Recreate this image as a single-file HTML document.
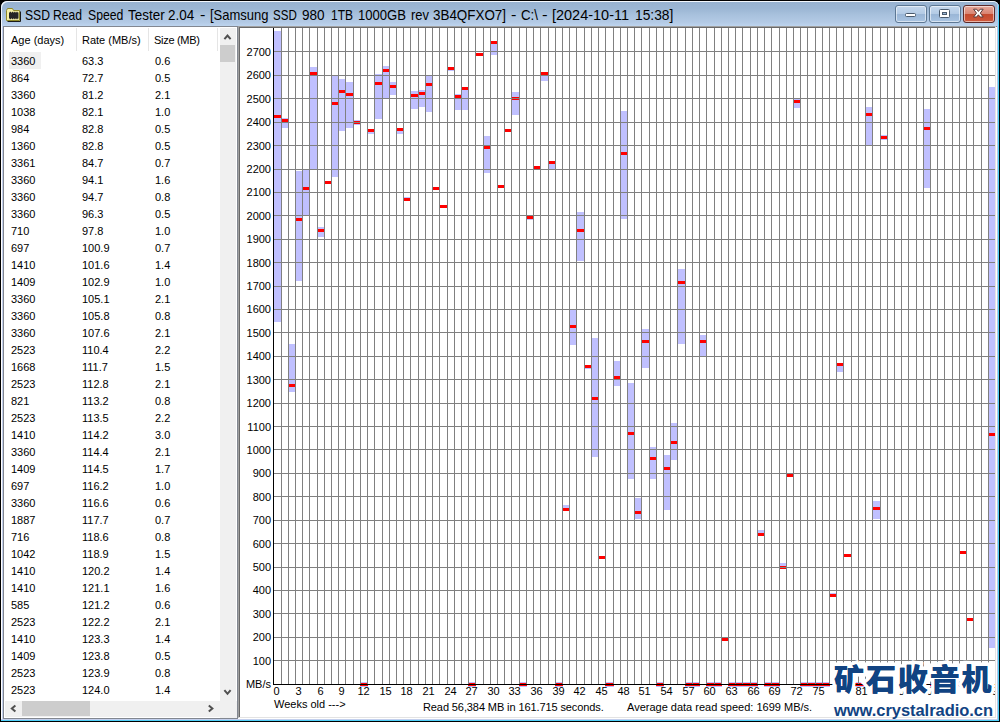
<!DOCTYPE html>
<html><head><meta charset="utf-8"><title>SSD Read Speed Tester</title>
<style>
html,body{margin:0;padding:0;}
body{width:1000px;height:722px;overflow:hidden;position:relative;background:#000;font-family:"Liberation Sans","Noto Sans CJK SC",sans-serif;}
#win{position:absolute;left:0;top:0;width:1000px;height:722px;background:#000;border-radius:7px 7px 0 0;overflow:hidden;}
#frame{position:absolute;left:1px;top:1px;width:998px;height:720px;border-radius:6px 6px 0 0;background:#fff;overflow:hidden;}
#tb{position:absolute;left:0;top:0;width:998px;height:25px;background:linear-gradient(#97b2d0 0,#9bb6d4 30%,#a8c1dd 55%,#b3cae5 85%,#bdd4ee 100%);box-shadow:inset 1px 1px 0 #f2f7fd, inset -1px 0 0 #dbe7f5;border-radius:6px 6px 0 0;}
#tbline{position:absolute;left:2px;top:25px;width:994px;height:1px;background:#6e7f92;}
#title{position:absolute;left:0;top:6px;width:700px;height:18px;font-size:14.5px;line-height:18px;color:#000;white-space:pre;letter-spacing:0px;}
.wb{position:absolute;top:5px;height:16px;border:1px solid #5d7894;border-radius:3px;box-shadow:inset 0 0 0 1px rgba(255,255,255,.55);}
#bmin{left:895px;width:30px;background:linear-gradient(#c5d8ed 0,#b4cbe5 48%,#9ab6d6 52%,#a9c4e2 100%);}
#bmax{left:929px;width:30px;background:linear-gradient(#c5d8ed 0,#b4cbe5 48%,#9ab6d6 52%,#a9c4e2 100%);}
#bcls{left:963px;width:30px;border-color:#5b2a2a;background:linear-gradient(#e6a99c 0,#d98573 48%,#c44a2f 52%,#d0583c 100%);}
#list{position:absolute;left:3px;top:26px;width:235px;height:693px;background:#fff;border:1px solid #828790;box-sizing:border-box;overflow:hidden;}
.hd{position:absolute;top:1px;height:24px;font-size:11px;line-height:24px;color:#000;}
.sep{position:absolute;top:1px;width:1px;height:23px;background:#e5e5e5;}
.row{position:absolute;left:0;height:17px;width:216px;font-size:11px;line-height:17px;color:#000;}
.row span{position:absolute;top:0;}
.c1{left:7px}.c2{left:78px}.c3{left:151px}
#vs{position:absolute;left:216px;top:1px;width:16px;height:689px;background:#f0f0f0;}
#vth{position:absolute;left:0px;top:17px;width:15px;height:17px;background:#cdcdcd;}
#hs{position:absolute;left:1px;top:674px;width:215px;height:16px;background:#f0f0f0;}
#hth{position:absolute;left:17px;top:0px;width:68px;height:15px;background:#cdcdcd;}
#chartp{position:absolute;left:238px;top:26px;width:758px;height:692px;background:#fff;box-sizing:border-box;border-left:1px solid #a0a0a0;border-top:1px solid #a0a0a0;border-right:1px solid #e3e3e3;border-bottom:1px solid #e3e3e3;box-shadow:inset 1px 1px 0 #696969;}
.chart{position:absolute;left:0;top:0;}
.yl{position:absolute;left:230px;width:41px;text-align:right;font-size:11px;line-height:14px;height:14px;color:#000;}
.xl{position:absolute;top:684px;width:20px;text-align:center;font-size:11px;line-height:14px;color:#000;}
.st{position:absolute;top:700px;font-size:11px;line-height:14px;color:#000;white-space:pre;}
#wm1{position:absolute;left:834px;top:655px;font-family:"Noto Sans CJK SC",sans-serif;font-weight:900;font-size:30px;line-height:44px;color:#114382;letter-spacing:1.9px;white-space:pre;-webkit-text-stroke:7px #fff;paint-order:stroke fill;}
#wm1b{position:absolute;left:834px;top:655px;font-family:"Noto Sans CJK SC",sans-serif;font-weight:900;font-size:30px;line-height:44px;color:#114382;letter-spacing:1.9px;white-space:pre;}
#wmbg{position:absolute;left:832px;top:662px;width:163px;height:55px;background:#fff;}
#wm2{position:absolute;left:834px;top:700px;font-weight:bold;font-size:16.5px;line-height:20px;color:#114382;white-space:pre;letter-spacing:-0.05px;}
#title span{position:absolute;top:0;transform-origin:0 0;display:inline-block;}
.ed{position:absolute;}
</style></head><body>
<div id="win"><div id="frame">
<div id="tb"></div><div id="tbline"></div>
<div class="ed" style="left:1px;top:25px;width:1px;height:694px;background:#c3d0ee"></div>
<div class="ed" style="left:0;top:718px;width:998px;height:1px;background:#c3d0ee"></div>
<div class="ed" style="left:996px;top:1px;width:1px;height:719px;background:#b4c6e8"></div>
<div class="ed" style="left:0;top:719px;width:998px;height:1px;background:#4fd0f8"></div>
<div class="ed" style="left:997px;top:1px;width:1px;height:719px;background:#4fd0f8"></div>
</div></div>
<svg style="position:absolute;left:5px;top:7px" width="17" height="15" viewBox="0 0 17 15">
<path d="M1.500 3.500 L2.500 1.500 L7.500 1.500 L8.500 3.500 L14.500 3.500 L14.500 13.500 L1.500 13.500 Z" fill="#f6f0a6" stroke="#8f8a2a" stroke-width="1"/>
<path d="M2.500 14.500 H15.500 V4.500" fill="none" stroke="#1a1a1a" stroke-width="1"/>
<rect x="4" y="5.500" width="9.500" height="6" fill="#262626"/>
<rect x="4.800" y="4.800" width="1.200" height="7.400" fill="#262626"/><rect x="7" y="4.800" width="1.200" height="7.400" fill="#262626"/><rect x="9.200" y="4.800" width="1.200" height="7.400" fill="#262626"/><rect x="11.400" y="4.800" width="1.200" height="7.400" fill="#262626"/>
</svg>
<div id="title"><span style="left:25.1px;transform:scaleX(0.838)">SSD</span> <span style="left:53.1px;transform:scaleX(0.836)">Read</span> <span style="left:87.5px;transform:scaleX(0.844)">Speed</span> <span style="left:127.5px;transform:scaleX(0.927)">Tester</span> <span style="left:167.9px;transform:scaleX(0.928)">2.04</span> <span style="left:199.5px;transform:scaleX(1.115)">-</span> <span style="left:209.5px;transform:scaleX(0.897)">[Samsung</span> <span style="left:273.1px;transform:scaleX(0.798)">SSD</span> <span style="left:301.5px;transform:scaleX(0.934)">980</span> <span style="left:330.5px;transform:scaleX(0.827)">1TB</span> <span style="left:357.5px;transform:scaleX(0.902)">1000GB</span> <span style="left:410.5px;transform:scaleX(0.893)">rev</span> <span style="left:433.1px;transform:scaleX(0.924)">3B4QFXO7]</span> <span style="left:511.1px;transform:scaleX(1.115)">-</span> <span style="left:520.5px;transform:scaleX(0.917)">C:\</span> <span style="left:541.9px;transform:scaleX(1.156)">-</span> <span style="left:551.5px;transform:scaleX(0.998)">[2024-10-11</span> <span style="left:635.1px;transform:scaleX(0.952)">15:38]</span></div>
<div class="wb" id="bmin"><svg width="29" height="16" style="position:absolute;left:1px;top:0"><rect x="8.5" y="7.5" width="10" height="3" rx="1" fill="#fff" stroke="#4a5a6c"/></svg></div>
<div class="wb" id="bmax"><svg width="29" height="16" style="position:absolute;left:1px;top:0"><rect x="8.500" y="3.5" width="10" height="8" rx="1" fill="#fff" stroke="#4a5a6c"/><rect x="11.5" y="6.5" width="4" height="2" fill="#9ab6d6" stroke="#4a5a6c"/></svg></div>
<div class="wb" id="bcls"><svg width="30" height="16" style="position:absolute;left:0;top:0"><path d="M9.600 3.200 L12.600 3.200 L14.400 5.400 L16.200 3.200 L19.200 3.200 L16.300 7.100 L19.200 11 L16.200 11 L14.400 8.800 L12.600 11 L9.600 11 L12.500 7.100 Z" fill="#fff" stroke="#5a3a3a" stroke-width="1" stroke-linejoin="round"/></svg></div>

<div id="list">
<div class="hd" style="left:7px">Age (days)</div><div class="hd" style="left:78px">Rate (MB/s)</div><div class="hd" style="left:150px;letter-spacing:-0.3px">Size (MB)</div>
<div class="sep" style="left:72px"></div><div class="sep" style="left:144px"></div><div class="sep" style="left:213px"></div>
<div style="position:absolute;left:5px;top:25px;width:32px;height:17px;background:#f0f0f0"></div>
<div class="row" style="top:26px"><span class="c1">3360</span><span class="c2">63.3</span><span class="c3">0.6</span></div>
<div class="row" style="top:43px"><span class="c1">864</span><span class="c2">72.7</span><span class="c3">0.5</span></div>
<div class="row" style="top:60px"><span class="c1">3360</span><span class="c2">81.2</span><span class="c3">2.1</span></div>
<div class="row" style="top:77px"><span class="c1">1038</span><span class="c2">82.1</span><span class="c3">1.0</span></div>
<div class="row" style="top:94px"><span class="c1">984</span><span class="c2">82.8</span><span class="c3">0.5</span></div>
<div class="row" style="top:111px"><span class="c1">1360</span><span class="c2">82.8</span><span class="c3">0.5</span></div>
<div class="row" style="top:128px"><span class="c1">3361</span><span class="c2">84.7</span><span class="c3">0.7</span></div>
<div class="row" style="top:145px"><span class="c1">3360</span><span class="c2">94.1</span><span class="c3">1.6</span></div>
<div class="row" style="top:162px"><span class="c1">3360</span><span class="c2">94.7</span><span class="c3">0.8</span></div>
<div class="row" style="top:179px"><span class="c1">3360</span><span class="c2">96.3</span><span class="c3">0.5</span></div>
<div class="row" style="top:196px"><span class="c1">710</span><span class="c2">97.8</span><span class="c3">1.0</span></div>
<div class="row" style="top:213px"><span class="c1">697</span><span class="c2">100.9</span><span class="c3">0.7</span></div>
<div class="row" style="top:230px"><span class="c1">1410</span><span class="c2">101.6</span><span class="c3">1.4</span></div>
<div class="row" style="top:247px"><span class="c1">1409</span><span class="c2">102.9</span><span class="c3">1.0</span></div>
<div class="row" style="top:264px"><span class="c1">3360</span><span class="c2">105.1</span><span class="c3">2.1</span></div>
<div class="row" style="top:281px"><span class="c1">3360</span><span class="c2">105.8</span><span class="c3">0.8</span></div>
<div class="row" style="top:298px"><span class="c1">3360</span><span class="c2">107.6</span><span class="c3">2.1</span></div>
<div class="row" style="top:315px"><span class="c1">2523</span><span class="c2">110.4</span><span class="c3">2.2</span></div>
<div class="row" style="top:332px"><span class="c1">1668</span><span class="c2">111.7</span><span class="c3">1.5</span></div>
<div class="row" style="top:349px"><span class="c1">2523</span><span class="c2">112.8</span><span class="c3">2.1</span></div>
<div class="row" style="top:366px"><span class="c1">821</span><span class="c2">113.2</span><span class="c3">0.8</span></div>
<div class="row" style="top:383px"><span class="c1">2523</span><span class="c2">113.5</span><span class="c3">2.2</span></div>
<div class="row" style="top:400px"><span class="c1">1410</span><span class="c2">114.2</span><span class="c3">3.0</span></div>
<div class="row" style="top:417px"><span class="c1">3360</span><span class="c2">114.4</span><span class="c3">2.1</span></div>
<div class="row" style="top:434px"><span class="c1">1409</span><span class="c2">114.5</span><span class="c3">1.7</span></div>
<div class="row" style="top:451px"><span class="c1">697</span><span class="c2">116.2</span><span class="c3">1.0</span></div>
<div class="row" style="top:468px"><span class="c1">3360</span><span class="c2">116.6</span><span class="c3">0.6</span></div>
<div class="row" style="top:485px"><span class="c1">1887</span><span class="c2">117.7</span><span class="c3">0.7</span></div>
<div class="row" style="top:502px"><span class="c1">716</span><span class="c2">118.6</span><span class="c3">0.8</span></div>
<div class="row" style="top:519px"><span class="c1">1042</span><span class="c2">118.9</span><span class="c3">1.5</span></div>
<div class="row" style="top:536px"><span class="c1">1410</span><span class="c2">120.2</span><span class="c3">1.4</span></div>
<div class="row" style="top:553px"><span class="c1">1410</span><span class="c2">121.1</span><span class="c3">1.6</span></div>
<div class="row" style="top:570px"><span class="c1">585</span><span class="c2">121.2</span><span class="c3">0.6</span></div>
<div class="row" style="top:587px"><span class="c1">2523</span><span class="c2">122.2</span><span class="c3">2.1</span></div>
<div class="row" style="top:604px"><span class="c1">1410</span><span class="c2">123.3</span><span class="c3">1.4</span></div>
<div class="row" style="top:621px"><span class="c1">1409</span><span class="c2">123.8</span><span class="c3">0.5</span></div>
<div class="row" style="top:638px"><span class="c1">2523</span><span class="c2">123.9</span><span class="c3">0.8</span></div>
<div class="row" style="top:655px"><span class="c1">2523</span><span class="c2">124.0</span><span class="c3">1.4</span></div>
<div id="vs"><div id="vth"></div>
<svg width="16" height="689" style="position:absolute;left:0;top:0"><path d="M4.400 11.100 L7.500 7.500 L10.600 11.100" fill="none" stroke="#505050" stroke-width="2"/><path d="M4.400 662.200 L7.500 665.800 L10.600 662.200" fill="none" stroke="#505050" stroke-width="2"/></svg></div>
<div style="position:absolute;left:216px;top:674px;width:17px;height:17px;background:#f0f0f0"></div>
<div id="hs"><div id="hth"></div>
<svg width="215" height="16" style="position:absolute;left:0;top:0"><path d="M10.400 4.400 L6.800 7.500 L10.400 10.600" fill="none" stroke="#505050" stroke-width="2"/><path d="M203.800 4.400 L207.400 7.500 L203.800 10.600" fill="none" stroke="#505050" stroke-width="2"/></svg></div>
</div>

<div id="chartp"></div>
<svg class="chart" width="1000" height="722" viewBox="0 0 1000 722" shape-rendering="crispEdges">
<rect x="274" y="31" width="7" height="291" fill="#c0c0ff"/>
<rect x="282" y="118" width="6" height="10" fill="#c0c0ff"/>
<rect x="289" y="344" width="6" height="48" fill="#c0c0ff"/>
<rect x="296" y="171" width="6" height="110" fill="#c0c0ff"/>
<rect x="303" y="170" width="6" height="45" fill="#c0c0ff"/>
<rect x="310" y="67" width="7" height="103" fill="#c0c0ff"/>
<rect x="318" y="227" width="6" height="10" fill="#c0c0ff"/>
<rect x="332" y="76" width="6" height="101" fill="#c0c0ff"/>
<rect x="339" y="79" width="6" height="52" fill="#c0c0ff"/>
<rect x="346" y="82" width="7" height="46" fill="#c0c0ff"/>
<rect x="354" y="120" width="6" height="5" fill="#c0c0ff"/>
<rect x="368" y="129" width="6" height="5" fill="#c0c0ff"/>
<rect x="375" y="74" width="7" height="45" fill="#c0c0ff"/>
<rect x="383" y="66" width="6" height="32" fill="#c0c0ff"/>
<rect x="390" y="82" width="6" height="13" fill="#c0c0ff"/>
<rect x="397" y="128" width="6" height="6" fill="#c0c0ff"/>
<rect x="404" y="197" width="6" height="4" fill="#c0c0ff"/>
<rect x="411" y="91" width="7" height="18" fill="#c0c0ff"/>
<rect x="419" y="90" width="6" height="17" fill="#c0c0ff"/>
<rect x="426" y="76" width="6" height="36" fill="#c0c0ff"/>
<rect x="448" y="67" width="6" height="4" fill="#c0c0ff"/>
<rect x="455" y="94" width="6" height="16" fill="#c0c0ff"/>
<rect x="462" y="87" width="6" height="23" fill="#c0c0ff"/>
<rect x="484" y="136" width="6" height="37" fill="#c0c0ff"/>
<rect x="491" y="41" width="6" height="14" fill="#c0c0ff"/>
<rect x="512" y="92" width="7" height="23" fill="#c0c0ff"/>
<rect x="527" y="216" width="6" height="4" fill="#c0c0ff"/>
<rect x="534" y="166" width="6" height="4" fill="#c0c0ff"/>
<rect x="541" y="72" width="7" height="9" fill="#c0c0ff"/>
<rect x="549" y="161" width="6" height="8" fill="#c0c0ff"/>
<rect x="563" y="505" width="6" height="6" fill="#c0c0ff"/>
<rect x="570" y="310" width="6" height="35" fill="#c0c0ff"/>
<rect x="577" y="212" width="7" height="49" fill="#c0c0ff"/>
<rect x="585" y="365" width="6" height="4" fill="#c0c0ff"/>
<rect x="592" y="338" width="6" height="119" fill="#c0c0ff"/>
<rect x="614" y="361" width="6" height="25" fill="#c0c0ff"/>
<rect x="621" y="111" width="6" height="108" fill="#c0c0ff"/>
<rect x="628" y="383" width="6" height="96" fill="#c0c0ff"/>
<rect x="635" y="498" width="6" height="21" fill="#c0c0ff"/>
<rect x="642" y="329" width="7" height="39" fill="#c0c0ff"/>
<rect x="650" y="447" width="6" height="32" fill="#c0c0ff"/>
<rect x="664" y="455" width="6" height="55" fill="#c0c0ff"/>
<rect x="671" y="423" width="6" height="37" fill="#c0c0ff"/>
<rect x="678" y="269" width="7" height="75" fill="#c0c0ff"/>
<rect x="700" y="335" width="6" height="21" fill="#c0c0ff"/>
<rect x="758" y="530" width="6" height="6" fill="#c0c0ff"/>
<rect x="780" y="563" width="6" height="6" fill="#c0c0ff"/>
<rect x="794" y="99" width="6" height="9" fill="#c0c0ff"/>
<rect x="830" y="593" width="6" height="4" fill="#c0c0ff"/>
<rect x="837" y="363" width="6" height="9" fill="#c0c0ff"/>
<rect x="866" y="107" width="6" height="38" fill="#c0c0ff"/>
<rect x="873" y="501" width="7" height="18" fill="#c0c0ff"/>
<rect x="881" y="135" width="6" height="5" fill="#c0c0ff"/>
<rect x="924" y="109" width="6" height="79" fill="#c0c0ff"/>
<rect x="989" y="87" width="6" height="561" fill="#c0c0ff"/>
<rect x="360" y="682" width="8" height="5" fill="#c0c0ff"/>
<rect x="468" y="682" width="8" height="5" fill="#c0c0ff"/>
<rect x="519" y="682" width="8" height="5" fill="#c0c0ff"/>
<rect x="555" y="682" width="8" height="5" fill="#c0c0ff"/>
<rect x="605" y="682" width="9" height="5" fill="#c0c0ff"/>
<rect x="656" y="682" width="8" height="5" fill="#c0c0ff"/>
<rect x="685" y="682" width="8" height="5" fill="#c0c0ff"/>
<rect x="692" y="682" width="8" height="5" fill="#c0c0ff"/>
<rect x="706" y="682" width="9" height="5" fill="#c0c0ff"/>
<rect x="714" y="682" width="8" height="5" fill="#c0c0ff"/>
<rect x="728" y="682" width="8" height="5" fill="#c0c0ff"/>
<rect x="735" y="682" width="8" height="5" fill="#c0c0ff"/>
<rect x="742" y="682" width="9" height="5" fill="#c0c0ff"/>
<rect x="750" y="682" width="8" height="5" fill="#c0c0ff"/>
<rect x="764" y="682" width="8" height="5" fill="#c0c0ff"/>
<rect x="771" y="682" width="9" height="5" fill="#c0c0ff"/>
<rect x="800" y="682" width="8" height="5" fill="#c0c0ff"/>
<rect x="807" y="682" width="9" height="5" fill="#c0c0ff"/>
<rect x="815" y="682" width="8" height="5" fill="#c0c0ff"/>
<rect x="822" y="682" width="8" height="5" fill="#c0c0ff"/>
<rect x="851" y="682" width="8" height="5" fill="#c0c0ff"/>
<rect x="858" y="682" width="8" height="5" fill="#c0c0ff"/>
<rect x="887" y="682" width="8" height="5" fill="#c0c0ff"/>
<rect x="894" y="682" width="8" height="5" fill="#c0c0ff"/>
<rect x="901" y="682" width="8" height="5" fill="#c0c0ff"/>
<rect x="908" y="682" width="9" height="5" fill="#c0c0ff"/>
<rect x="916" y="682" width="8" height="5" fill="#c0c0ff"/>
<rect x="930" y="682" width="8" height="5" fill="#c0c0ff"/>
<rect x="937" y="682" width="8" height="5" fill="#c0c0ff"/>
<rect x="944" y="682" width="9" height="5" fill="#c0c0ff"/>
<rect x="952" y="682" width="8" height="5" fill="#c0c0ff"/>
<rect x="973" y="682" width="9" height="5" fill="#c0c0ff"/>
<rect x="981" y="682" width="8" height="5" fill="#c0c0ff"/>
<rect x="274" y="115" width="7" height="3" fill="#ff0000"/>
<rect x="282" y="119" width="6" height="3" fill="#ff0000"/>
<rect x="289" y="384" width="6" height="3" fill="#ff0000"/>
<rect x="296" y="218" width="6" height="3" fill="#ff0000"/>
<rect x="303" y="187" width="6" height="3" fill="#ff0000"/>
<rect x="310" y="72" width="7" height="3" fill="#ff0000"/>
<rect x="318" y="229" width="6" height="3" fill="#ff0000"/>
<rect x="325" y="181" width="6" height="3" fill="#ff0000"/>
<rect x="332" y="102" width="6" height="3" fill="#ff0000"/>
<rect x="339" y="90" width="6" height="3" fill="#ff0000"/>
<rect x="346" y="93" width="7" height="3" fill="#ff0000"/>
<rect x="354" y="121" width="6" height="3" fill="#ff0000"/>
<rect x="360" y="683" width="8" height="3" fill="#ff0000"/>
<rect x="368" y="129" width="6" height="3" fill="#ff0000"/>
<rect x="375" y="82" width="7" height="3" fill="#ff0000"/>
<rect x="383" y="69" width="6" height="3" fill="#ff0000"/>
<rect x="390" y="85" width="6" height="3" fill="#ff0000"/>
<rect x="397" y="128" width="6" height="3" fill="#ff0000"/>
<rect x="404" y="198" width="6" height="3" fill="#ff0000"/>
<rect x="411" y="94" width="7" height="3" fill="#ff0000"/>
<rect x="419" y="92" width="6" height="3" fill="#ff0000"/>
<rect x="426" y="83" width="6" height="3" fill="#ff0000"/>
<rect x="433" y="187" width="6" height="3" fill="#ff0000"/>
<rect x="440" y="205" width="7" height="3" fill="#ff0000"/>
<rect x="448" y="67" width="6" height="3" fill="#ff0000"/>
<rect x="455" y="95" width="6" height="3" fill="#ff0000"/>
<rect x="462" y="87" width="6" height="3" fill="#ff0000"/>
<rect x="468" y="683" width="8" height="3" fill="#ff0000"/>
<rect x="476" y="53" width="7" height="3" fill="#ff0000"/>
<rect x="484" y="146" width="6" height="3" fill="#ff0000"/>
<rect x="491" y="41" width="6" height="3" fill="#ff0000"/>
<rect x="498" y="185" width="6" height="3" fill="#ff0000"/>
<rect x="505" y="129" width="6" height="3" fill="#ff0000"/>
<rect x="512" y="97" width="7" height="3" fill="#ff0000"/>
<rect x="519" y="683" width="8" height="3" fill="#ff0000"/>
<rect x="527" y="216" width="6" height="3" fill="#ff0000"/>
<rect x="534" y="166" width="6" height="3" fill="#ff0000"/>
<rect x="541" y="72" width="7" height="3" fill="#ff0000"/>
<rect x="549" y="161" width="6" height="3" fill="#ff0000"/>
<rect x="555" y="683" width="8" height="3" fill="#ff0000"/>
<rect x="563" y="508" width="6" height="3" fill="#ff0000"/>
<rect x="570" y="325" width="6" height="3" fill="#ff0000"/>
<rect x="577" y="229" width="7" height="3" fill="#ff0000"/>
<rect x="585" y="365" width="6" height="3" fill="#ff0000"/>
<rect x="592" y="397" width="6" height="3" fill="#ff0000"/>
<rect x="599" y="556" width="6" height="3" fill="#ff0000"/>
<rect x="605" y="683" width="9" height="3" fill="#ff0000"/>
<rect x="614" y="376" width="6" height="3" fill="#ff0000"/>
<rect x="621" y="152" width="6" height="3" fill="#ff0000"/>
<rect x="628" y="432" width="6" height="3" fill="#ff0000"/>
<rect x="635" y="511" width="6" height="3" fill="#ff0000"/>
<rect x="642" y="340" width="7" height="3" fill="#ff0000"/>
<rect x="650" y="457" width="6" height="3" fill="#ff0000"/>
<rect x="656" y="683" width="8" height="3" fill="#ff0000"/>
<rect x="664" y="467" width="6" height="3" fill="#ff0000"/>
<rect x="671" y="441" width="6" height="3" fill="#ff0000"/>
<rect x="678" y="281" width="7" height="3" fill="#ff0000"/>
<rect x="685" y="683" width="8" height="3" fill="#ff0000"/>
<rect x="692" y="683" width="8" height="3" fill="#ff0000"/>
<rect x="700" y="340" width="6" height="3" fill="#ff0000"/>
<rect x="706" y="683" width="9" height="3" fill="#ff0000"/>
<rect x="714" y="683" width="8" height="3" fill="#ff0000"/>
<rect x="722" y="638" width="6" height="3" fill="#ff0000"/>
<rect x="728" y="683" width="8" height="3" fill="#ff0000"/>
<rect x="735" y="683" width="8" height="3" fill="#ff0000"/>
<rect x="742" y="683" width="9" height="3" fill="#ff0000"/>
<rect x="750" y="683" width="8" height="3" fill="#ff0000"/>
<rect x="758" y="533" width="6" height="3" fill="#ff0000"/>
<rect x="764" y="683" width="8" height="3" fill="#ff0000"/>
<rect x="771" y="683" width="9" height="3" fill="#ff0000"/>
<rect x="780" y="566" width="6" height="3" fill="#ff0000"/>
<rect x="787" y="474" width="6" height="3" fill="#ff0000"/>
<rect x="794" y="100" width="6" height="3" fill="#ff0000"/>
<rect x="800" y="683" width="8" height="3" fill="#ff0000"/>
<rect x="807" y="683" width="9" height="3" fill="#ff0000"/>
<rect x="815" y="683" width="8" height="3" fill="#ff0000"/>
<rect x="822" y="683" width="8" height="3" fill="#ff0000"/>
<rect x="830" y="594" width="6" height="3" fill="#ff0000"/>
<rect x="837" y="363" width="6" height="3" fill="#ff0000"/>
<rect x="844" y="554" width="7" height="3" fill="#ff0000"/>
<rect x="851" y="683" width="8" height="3" fill="#ff0000"/>
<rect x="858" y="683" width="8" height="3" fill="#ff0000"/>
<rect x="866" y="113" width="6" height="3" fill="#ff0000"/>
<rect x="873" y="507" width="7" height="3" fill="#ff0000"/>
<rect x="881" y="136" width="6" height="3" fill="#ff0000"/>
<rect x="887" y="683" width="8" height="3" fill="#ff0000"/>
<rect x="894" y="683" width="8" height="3" fill="#ff0000"/>
<rect x="901" y="683" width="8" height="3" fill="#ff0000"/>
<rect x="908" y="683" width="9" height="3" fill="#ff0000"/>
<rect x="916" y="683" width="8" height="3" fill="#ff0000"/>
<rect x="924" y="127" width="6" height="3" fill="#ff0000"/>
<rect x="930" y="683" width="8" height="3" fill="#ff0000"/>
<rect x="937" y="683" width="8" height="3" fill="#ff0000"/>
<rect x="944" y="683" width="9" height="3" fill="#ff0000"/>
<rect x="952" y="683" width="8" height="3" fill="#ff0000"/>
<rect x="960" y="551" width="6" height="3" fill="#ff0000"/>
<rect x="967" y="618" width="6" height="3" fill="#ff0000"/>
<rect x="973" y="683" width="9" height="3" fill="#ff0000"/>
<rect x="981" y="683" width="8" height="3" fill="#ff0000"/>
<rect x="989" y="433" width="6" height="3" fill="#ff0000"/>
<rect x="281" y="28" width="1" height="657" fill="#808080"/>
<rect x="288" y="28" width="1" height="657" fill="#808080"/>
<rect x="295" y="28" width="1" height="657" fill="#808080"/>
<rect x="302" y="28" width="1" height="657" fill="#808080"/>
<rect x="309" y="28" width="1" height="657" fill="#808080"/>
<rect x="317" y="28" width="1" height="657" fill="#808080"/>
<rect x="324" y="28" width="1" height="657" fill="#808080"/>
<rect x="331" y="28" width="1" height="657" fill="#808080"/>
<rect x="338" y="28" width="1" height="657" fill="#808080"/>
<rect x="345" y="28" width="1" height="657" fill="#808080"/>
<rect x="353" y="28" width="1" height="657" fill="#808080"/>
<rect x="360" y="28" width="1" height="657" fill="#808080"/>
<rect x="367" y="28" width="1" height="657" fill="#808080"/>
<rect x="374" y="28" width="1" height="657" fill="#808080"/>
<rect x="382" y="28" width="1" height="657" fill="#808080"/>
<rect x="389" y="28" width="1" height="657" fill="#808080"/>
<rect x="396" y="28" width="1" height="657" fill="#808080"/>
<rect x="403" y="28" width="1" height="657" fill="#808080"/>
<rect x="410" y="28" width="1" height="657" fill="#808080"/>
<rect x="418" y="28" width="1" height="657" fill="#808080"/>
<rect x="425" y="28" width="1" height="657" fill="#808080"/>
<rect x="432" y="28" width="1" height="657" fill="#808080"/>
<rect x="439" y="28" width="1" height="657" fill="#808080"/>
<rect x="447" y="28" width="1" height="657" fill="#808080"/>
<rect x="454" y="28" width="1" height="657" fill="#808080"/>
<rect x="461" y="28" width="1" height="657" fill="#808080"/>
<rect x="468" y="28" width="1" height="657" fill="#808080"/>
<rect x="475" y="28" width="1" height="657" fill="#808080"/>
<rect x="483" y="28" width="1" height="657" fill="#808080"/>
<rect x="490" y="28" width="1" height="657" fill="#808080"/>
<rect x="497" y="28" width="1" height="657" fill="#808080"/>
<rect x="504" y="28" width="1" height="657" fill="#808080"/>
<rect x="511" y="28" width="1" height="657" fill="#808080"/>
<rect x="519" y="28" width="1" height="657" fill="#808080"/>
<rect x="526" y="28" width="1" height="657" fill="#808080"/>
<rect x="533" y="28" width="1" height="657" fill="#808080"/>
<rect x="540" y="28" width="1" height="657" fill="#808080"/>
<rect x="548" y="28" width="1" height="657" fill="#808080"/>
<rect x="555" y="28" width="1" height="657" fill="#808080"/>
<rect x="562" y="28" width="1" height="657" fill="#808080"/>
<rect x="569" y="28" width="1" height="657" fill="#808080"/>
<rect x="576" y="28" width="1" height="657" fill="#808080"/>
<rect x="584" y="28" width="1" height="657" fill="#808080"/>
<rect x="591" y="28" width="1" height="657" fill="#808080"/>
<rect x="598" y="28" width="1" height="657" fill="#808080"/>
<rect x="605" y="28" width="1" height="657" fill="#808080"/>
<rect x="613" y="28" width="1" height="657" fill="#808080"/>
<rect x="620" y="28" width="1" height="657" fill="#808080"/>
<rect x="627" y="28" width="1" height="657" fill="#808080"/>
<rect x="634" y="28" width="1" height="657" fill="#808080"/>
<rect x="641" y="28" width="1" height="657" fill="#808080"/>
<rect x="649" y="28" width="1" height="657" fill="#808080"/>
<rect x="656" y="28" width="1" height="657" fill="#808080"/>
<rect x="663" y="28" width="1" height="657" fill="#808080"/>
<rect x="670" y="28" width="1" height="657" fill="#808080"/>
<rect x="677" y="28" width="1" height="657" fill="#808080"/>
<rect x="685" y="28" width="1" height="657" fill="#808080"/>
<rect x="692" y="28" width="1" height="657" fill="#808080"/>
<rect x="699" y="28" width="1" height="657" fill="#808080"/>
<rect x="706" y="28" width="1" height="657" fill="#808080"/>
<rect x="714" y="28" width="1" height="657" fill="#808080"/>
<rect x="721" y="28" width="1" height="657" fill="#808080"/>
<rect x="728" y="28" width="1" height="657" fill="#808080"/>
<rect x="735" y="28" width="1" height="657" fill="#808080"/>
<rect x="742" y="28" width="1" height="657" fill="#808080"/>
<rect x="750" y="28" width="1" height="657" fill="#808080"/>
<rect x="757" y="28" width="1" height="657" fill="#808080"/>
<rect x="764" y="28" width="1" height="657" fill="#808080"/>
<rect x="771" y="28" width="1" height="657" fill="#808080"/>
<rect x="779" y="28" width="1" height="657" fill="#808080"/>
<rect x="786" y="28" width="1" height="657" fill="#808080"/>
<rect x="793" y="28" width="1" height="657" fill="#808080"/>
<rect x="800" y="28" width="1" height="657" fill="#808080"/>
<rect x="807" y="28" width="1" height="657" fill="#808080"/>
<rect x="815" y="28" width="1" height="657" fill="#808080"/>
<rect x="822" y="28" width="1" height="657" fill="#808080"/>
<rect x="829" y="28" width="1" height="657" fill="#808080"/>
<rect x="836" y="28" width="1" height="657" fill="#808080"/>
<rect x="843" y="28" width="1" height="657" fill="#808080"/>
<rect x="851" y="28" width="1" height="657" fill="#808080"/>
<rect x="858" y="28" width="1" height="657" fill="#808080"/>
<rect x="865" y="28" width="1" height="657" fill="#808080"/>
<rect x="872" y="28" width="1" height="657" fill="#808080"/>
<rect x="880" y="28" width="1" height="657" fill="#808080"/>
<rect x="887" y="28" width="1" height="657" fill="#808080"/>
<rect x="894" y="28" width="1" height="657" fill="#808080"/>
<rect x="901" y="28" width="1" height="657" fill="#808080"/>
<rect x="908" y="28" width="1" height="657" fill="#808080"/>
<rect x="916" y="28" width="1" height="657" fill="#808080"/>
<rect x="923" y="28" width="1" height="657" fill="#808080"/>
<rect x="930" y="28" width="1" height="657" fill="#808080"/>
<rect x="937" y="28" width="1" height="657" fill="#808080"/>
<rect x="944" y="28" width="1" height="657" fill="#808080"/>
<rect x="952" y="28" width="1" height="657" fill="#808080"/>
<rect x="959" y="28" width="1" height="657" fill="#808080"/>
<rect x="966" y="28" width="1" height="657" fill="#808080"/>
<rect x="973" y="28" width="1" height="657" fill="#808080"/>
<rect x="981" y="28" width="1" height="657" fill="#808080"/>
<rect x="988" y="28" width="1" height="657" fill="#808080"/>
<rect x="274" y="660" width="721" height="1" fill="#808080"/>
<rect x="274" y="637" width="721" height="1" fill="#808080"/>
<rect x="274" y="613" width="721" height="1" fill="#808080"/>
<rect x="274" y="590" width="721" height="1" fill="#808080"/>
<rect x="274" y="567" width="721" height="1" fill="#808080"/>
<rect x="274" y="543" width="721" height="1" fill="#808080"/>
<rect x="274" y="520" width="721" height="1" fill="#808080"/>
<rect x="274" y="496" width="721" height="1" fill="#808080"/>
<rect x="274" y="473" width="721" height="1" fill="#808080"/>
<rect x="274" y="449" width="721" height="1" fill="#808080"/>
<rect x="274" y="426" width="721" height="1" fill="#808080"/>
<rect x="274" y="403" width="721" height="1" fill="#808080"/>
<rect x="274" y="379" width="721" height="1" fill="#808080"/>
<rect x="274" y="356" width="721" height="1" fill="#808080"/>
<rect x="274" y="332" width="721" height="1" fill="#808080"/>
<rect x="274" y="309" width="721" height="1" fill="#808080"/>
<rect x="274" y="286" width="721" height="1" fill="#808080"/>
<rect x="274" y="262" width="721" height="1" fill="#808080"/>
<rect x="274" y="239" width="721" height="1" fill="#808080"/>
<rect x="274" y="215" width="721" height="1" fill="#808080"/>
<rect x="274" y="192" width="721" height="1" fill="#808080"/>
<rect x="274" y="169" width="721" height="1" fill="#808080"/>
<rect x="274" y="145" width="721" height="1" fill="#808080"/>
<rect x="274" y="122" width="721" height="1" fill="#808080"/>
<rect x="274" y="98" width="721" height="1" fill="#808080"/>
<rect x="274" y="75" width="721" height="1" fill="#808080"/>
<rect x="274" y="51" width="721" height="1" fill="#808080"/>
<rect x="273" y="28" width="1" height="657" fill="#000"/>
<rect x="273" y="684" width="722" height="1" fill="#000"/>
</svg>
<div style="position:absolute;left:0;top:0;width:995px;height:717px;overflow:hidden">
<div class="yl" style="top:654px">100</div>
<div class="yl" style="top:630px">200</div>
<div class="yl" style="top:607px">300</div>
<div class="yl" style="top:583px">400</div>
<div class="yl" style="top:560px">500</div>
<div class="yl" style="top:537px">600</div>
<div class="yl" style="top:513px">700</div>
<div class="yl" style="top:490px">800</div>
<div class="yl" style="top:466px">900</div>
<div class="yl" style="top:443px">1000</div>
<div class="yl" style="top:420px">1100</div>
<div class="yl" style="top:396px">1200</div>
<div class="yl" style="top:373px">1300</div>
<div class="yl" style="top:349px">1400</div>
<div class="yl" style="top:326px">1500</div>
<div class="yl" style="top:302px">1600</div>
<div class="yl" style="top:279px">1700</div>
<div class="yl" style="top:256px">1800</div>
<div class="yl" style="top:232px">1900</div>
<div class="yl" style="top:209px">2000</div>
<div class="yl" style="top:185px">2100</div>
<div class="yl" style="top:162px">2200</div>
<div class="yl" style="top:139px">2300</div>
<div class="yl" style="top:115px">2400</div>
<div class="yl" style="top:92px">2500</div>
<div class="yl" style="top:68px">2600</div>
<div class="yl" style="top:45px">2700</div>
<div class="yl" style="top:677px">MB/s</div>
<div class="xl" style="left:266.5px">0</div>
<div class="xl" style="left:288.5px">3</div>
<div class="xl" style="left:310.5px">6</div>
<div class="xl" style="left:331.5px">9</div>
<div class="xl" style="left:353.5px">12</div>
<div class="xl" style="left:375.5px">15</div>
<div class="xl" style="left:396.5px">18</div>
<div class="xl" style="left:418.5px">21</div>
<div class="xl" style="left:440.5px">24</div>
<div class="xl" style="left:461.5px">27</div>
<div class="xl" style="left:483.5px">30</div>
<div class="xl" style="left:504.5px">33</div>
<div class="xl" style="left:526.5px">36</div>
<div class="xl" style="left:548.5px">39</div>
<div class="xl" style="left:569.5px">42</div>
<div class="xl" style="left:591.5px">45</div>
<div class="xl" style="left:613.5px">48</div>
<div class="xl" style="left:634.5px">51</div>
<div class="xl" style="left:656.5px">54</div>
<div class="xl" style="left:678.5px">57</div>
<div class="xl" style="left:699.5px">60</div>
<div class="xl" style="left:721.5px">63</div>
<div class="xl" style="left:743.5px">66</div>
<div class="xl" style="left:764.5px">69</div>
<div class="xl" style="left:786.5px">72</div>
<div class="xl" style="left:808.5px">75</div>
<div class="xl" style="left:829.5px">78</div>
<div class="xl" style="left:851.5px">81</div>
<div class="xl" style="left:873.5px">84</div>
<div class="xl" style="left:894.5px">87</div>
<div class="xl" style="left:916.5px">90</div>
<div class="xl" style="left:937.5px">93</div>
<div class="xl" style="left:959.5px">96</div>
<div class="xl" style="left:981.5px">99</div>
</div>
<div class="st" style="left:274px;top:697px">Weeks old ---&gt;</div>
<div class="st" style="left:423px;letter-spacing:-0.1px">Read 56,384 MB in 161.715 seconds.</div>
<div class="st" style="left:627px">Average data read speed: 1699 MB/s.</div>
<div id="wm1">矿石收音机</div>
<div id="wm1b">矿石收音机</div>
<div id="wm2">www.crystalradio.cn</div>
</body></html>
